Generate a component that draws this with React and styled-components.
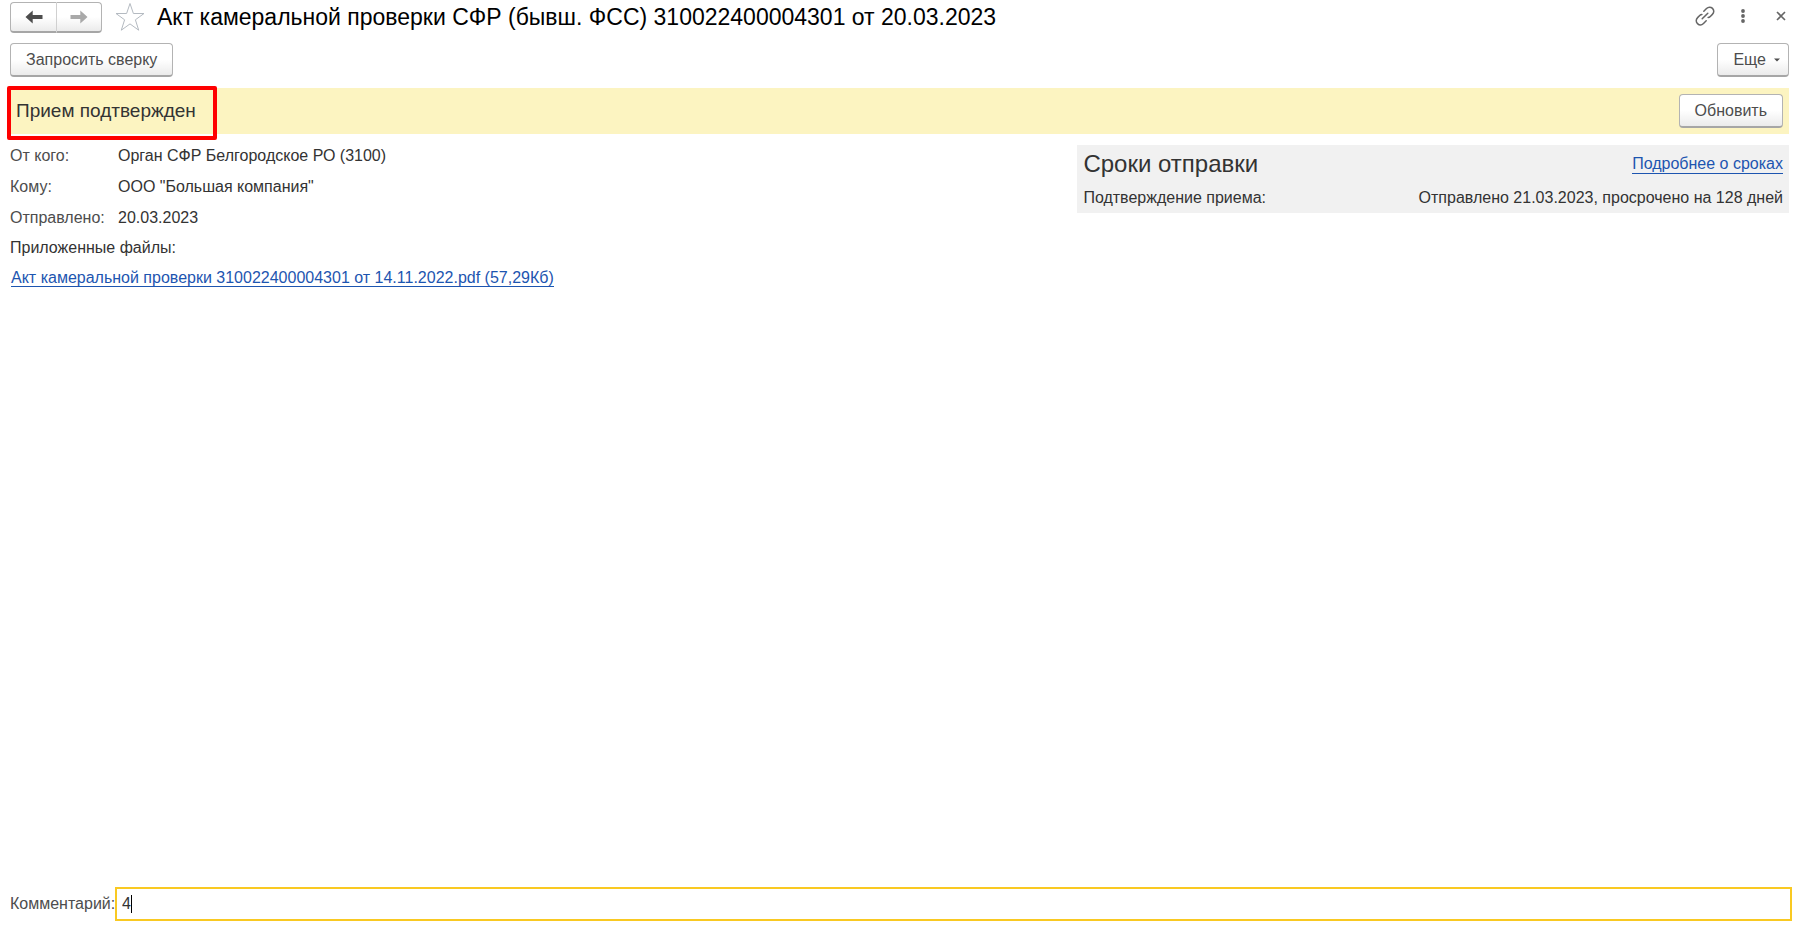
import React, { useState } from "react";
import styled, { createGlobalStyle } from "styled-components";

const GlobalStyle = createGlobalStyle`
  body {
    margin: 0;
    background: #fff;
    color: #333;
    font: 16px/20px "Liberation Sans", Arial, sans-serif;
  }
`;

const Page = styled.div`
  display: flex;
  flex-direction: column;
  min-height: 100vh;
  padding: 2px 10px 9px;
  box-sizing: border-box;
`;

const Header = styled.header`
  display: flex;
  align-items: flex-start;
  height: 31px;
`;

const Button = styled.button`
  display: flex;
  align-items: center;
  justify-content: center;
  gap: 8px;
  height: 34px;
  padding: 0 15px;
  border: 1px solid #b3b3b3;
  border-bottom: 2px solid #a6a6a6;
  border-radius: 4px;
  background: linear-gradient(#fff 50%, #ebebeb);
  color: #4d4d4d;
  font: inherit;
  box-sizing: border-box;
`;

const NavGroup = styled.div`
  display: flex;
`;

const NavButton = styled(Button)`
  width: 45px;
  height: 31px;
  padding: 0;
  color: ${(props) => (props.$muted ? "#a9a9a9" : "#4d4d4d")};

  &:first-child {
    width: 47px;
    border-right-color: #d0d0d0;
    border-radius: 4px 0 0 4px;
  }

  &:last-child {
    border-left: 0;
    border-radius: 0 4px 4px 0;
  }
`;

const IconButton = styled.button`
  display: flex;
  align-items: center;
  justify-content: center;
  width: 38px;
  height: 28px;
  padding: 0;
  border: 0;
  background: none;
  color: #666;
`;

const StarButton = styled(IconButton)`
  height: 30px;
  margin: 0 8px 0 9px;
`;

const Title = styled.h1`
  margin: 0;
  color: #000;
  font-size: 23px;
  font-weight: 400;
  line-height: 30px;
  white-space: nowrap;
`;

const WindowButtons = styled.div`
  display: flex;
  margin-left: auto;
  margin-right: -8px;
`;

const Toolbar = styled.div`
  display: flex;
  justify-content: space-between;
  margin-top: 10px;
`;

const Banner = styled.section`
  position: relative;
  display: flex;
  align-items: center;
  justify-content: space-between;
  height: 46px;
  margin: 11px 3px 0 0;
  padding: 0 6px;
  background: #fcf4c1;
`;

const BannerText = styled.span`
  font-size: 19px;
  line-height: 24px;
`;

const Highlight = styled.div`
  position: absolute;
  top: -2px;
  left: -3px;
  width: 210px;
  height: 54px;
  border: 4px solid #fe0000;
  border-radius: 2px;
  box-sizing: border-box;
`;

const Content = styled.main`
  display: grid;
  grid-template-columns: 3fr 2fr;
  flex: 1;
  align-items: start;
  margin: 6px 3px 0 0;
`;

const Fields = styled.dl`
  display: grid;
  grid-template-columns: 108px 1fr;
  margin: 0;
  line-height: 31px;
`;

const FieldName = styled.dt`
  color: #4d4d4d;
`;

const FieldValue = styled.dd`
  margin: 0;
`;

const Files = styled.div`
  line-height: 30px;
`;

const FileLine = styled.div`
  padding-left: ${(props) => (props.$inset ? "1px" : "0")};
`;

const Link = styled.a`
  color: #1d55b0;
  text-decoration: none;
  border-bottom: 1px solid #1d55b0;
  line-height: 18px;
`;

const Deadlines = styled.section`
  display: flex;
  flex-direction: column;
  gap: 10px;
  margin-top: 5px;
  padding: 5px 6px;
  background: #f1f1f1;
`;

const DeadlineRow = styled.div`
  display: flex;
  align-items: center;
  justify-content: space-between;
`;

const SectionTitle = styled.h2`
  margin: 0;
  font-size: 24px;
  font-weight: 400;
  line-height: 28px;
`;

const CommentRow = styled.div`
  display: flex;
  align-items: center;
  color: #4d4d4d;
`;

const CommentLabel = styled.label`
  width: 105px;
  white-space: nowrap;
`;

const CommentBox = styled.div`
  position: relative;
  flex: 1;
`;

const CommentInput = styled.input`
  display: block;
  width: 100%;
  height: 34px;
  padding: 0 5px;
  border: 2px solid #f9c922;
  outline: 0;
  background: #fff;
  color: #333;
  font: inherit;
  box-sizing: border-box;
  caret-color: transparent;
`;

const Caret = styled.span`
  position: absolute;
  top: 8px;
  left: 16px;
  width: 1px;
  height: 18px;
  background: #000;
`;

const Arrow = ({ flip }) => (
  <svg width="18" height="14" viewBox="0 0 18 14">
    <path
      d="M7.7.6v4.5h9.8v3.8H7.7v4.5L.5 7z"
      fill="currentColor"
      transform={flip ? "matrix(-1 0 0 1 18 0)" : undefined}
    />
  </svg>
);

const StarIcon = () => (
  <svg width="30" height="30" viewBox="0 0 30 30" fill="none" stroke="#b4bac1">
    <path d="M15 1.5l3.4 10H29l-8.6 6.3 3.3 10.4L15 21.9l-8.7 6.3 3.3-10.4L1 11.5h10.6z" />
  </svg>
);

const LinkIcon = () => (
  <svg
    width="20"
    height="20"
    viewBox="0 0 20 20"
    fill="none"
    stroke="currentColor"
    strokeWidth="1.5"
    strokeLinecap="round"
  >
    <path d="M8.8 5.2l2.7-2.7c1.8-1.8 4.3-1.8 6-.1s1.7 4.200-.1 6l-2.100 2.100c-.7.7-1.400 1-2.200 1" />
    <path d="M11.2 14.8l-2.7 2.7c-1.800 1.800-4.300 1.800-6 .1s-1.700-4.200.1-6l2.100-2.100c.7-.7 1.400-1 2.200-1" />
    <path d="M7.2 12.8l5.6-5.6" />
  </svg>
);

const MoreIcon = () => (
  <svg width="4" height="14" viewBox="0 0 4 14" fill="currentColor">
    <circle cx="2" cy="2" r="1.9" />
    <circle cx="2" cy="7" r="1.9" />
    <circle cx="2" cy="12" r="1.9" />
  </svg>
);

const CloseIcon = () => (
  <svg width="10" height="10" viewBox="0 0 10 10" stroke="currentColor" strokeWidth="1.6">
    <path d="M1 1l8 8M9 1L1 9" />
  </svg>
);

const DropIcon = () => (
  <svg width="6" height="4" viewBox="0 0 6 4" fill="currentColor">
    <path d="M0 .5h6L3 3.5z" />
  </svg>
);

const MoreButton = styled(Button)`
  margin-right: 3px;
  padding-right: 8px;
`;

const fields = [
  { name: "От кого:", value: "Орган СФР Белгородское РО (3100)" },
  { name: "Кому:", value: 'ООО "Большая компания"' },
  { name: "Отправлено:", value: "20.03.2023" },
];

const App = () => {
  const [comment, setComment] = useState("4");

  return (
    <>
      <GlobalStyle />
      <Page>
        <Header>
          <NavGroup>
            <NavButton aria-label="Назад">
              <Arrow />
            </NavButton>
            <NavButton aria-label="Вперед" $muted>
              <Arrow flip />
            </NavButton>
          </NavGroup>
          <StarButton aria-label="В избранное">
            <StarIcon />
          </StarButton>
          <Title>
            Акт камеральной проверки СФР (бывш. ФСС) 310022400004301 от 20.03.2023
          </Title>
          <WindowButtons>
            <IconButton aria-label="Ссылка">
              <LinkIcon />
            </IconButton>
            <IconButton aria-label="Меню">
              <MoreIcon />
            </IconButton>
            <IconButton aria-label="Закрыть">
              <CloseIcon />
            </IconButton>
          </WindowButtons>
        </Header>

        <Toolbar>
          <Button>Запросить сверку</Button>
          <MoreButton>
            Еще
            <DropIcon />
          </MoreButton>
        </Toolbar>

        <Banner>
          <BannerText>Прием подтвержден</BannerText>
          <Button>Обновить</Button>
          <Highlight />
        </Banner>

        <Content>
          <div>
            <Fields>
              {fields.map((field) => (
                <React.Fragment key={field.name}>
                  <FieldName>{field.name}</FieldName>
                  <FieldValue>{field.value}</FieldValue>
                </React.Fragment>
              ))}
            </Fields>
            <Files>
              <FileLine>Приложенные файлы:</FileLine>
              <FileLine $inset>
                <Link href="#file">
                  Акт камеральной проверки 310022400004301 от 14.11.2022.pdf (57,29Кб)
                </Link>
              </FileLine>
            </Files>
          </div>

          <Deadlines>
            <DeadlineRow>
              <SectionTitle>Сроки отправки</SectionTitle>
              <Link href="#deadlines">Подробнее о сроках</Link>
            </DeadlineRow>
            <DeadlineRow>
              <span>Подтверждение приема:</span>
              <span>Отправлено 21.03.2023, просрочено на 128 дней</span>
            </DeadlineRow>
          </Deadlines>
        </Content>

        <CommentRow>
          <CommentLabel htmlFor="comment">Комментарий:</CommentLabel>
          <CommentBox>
            <CommentInput
              id="comment"
              value={comment}
              onChange={(e) => setComment(e.target.value)}
            />
            <Caret />
          </CommentBox>
        </CommentRow>
      </Page>
    </>
  );
};

export default App;
